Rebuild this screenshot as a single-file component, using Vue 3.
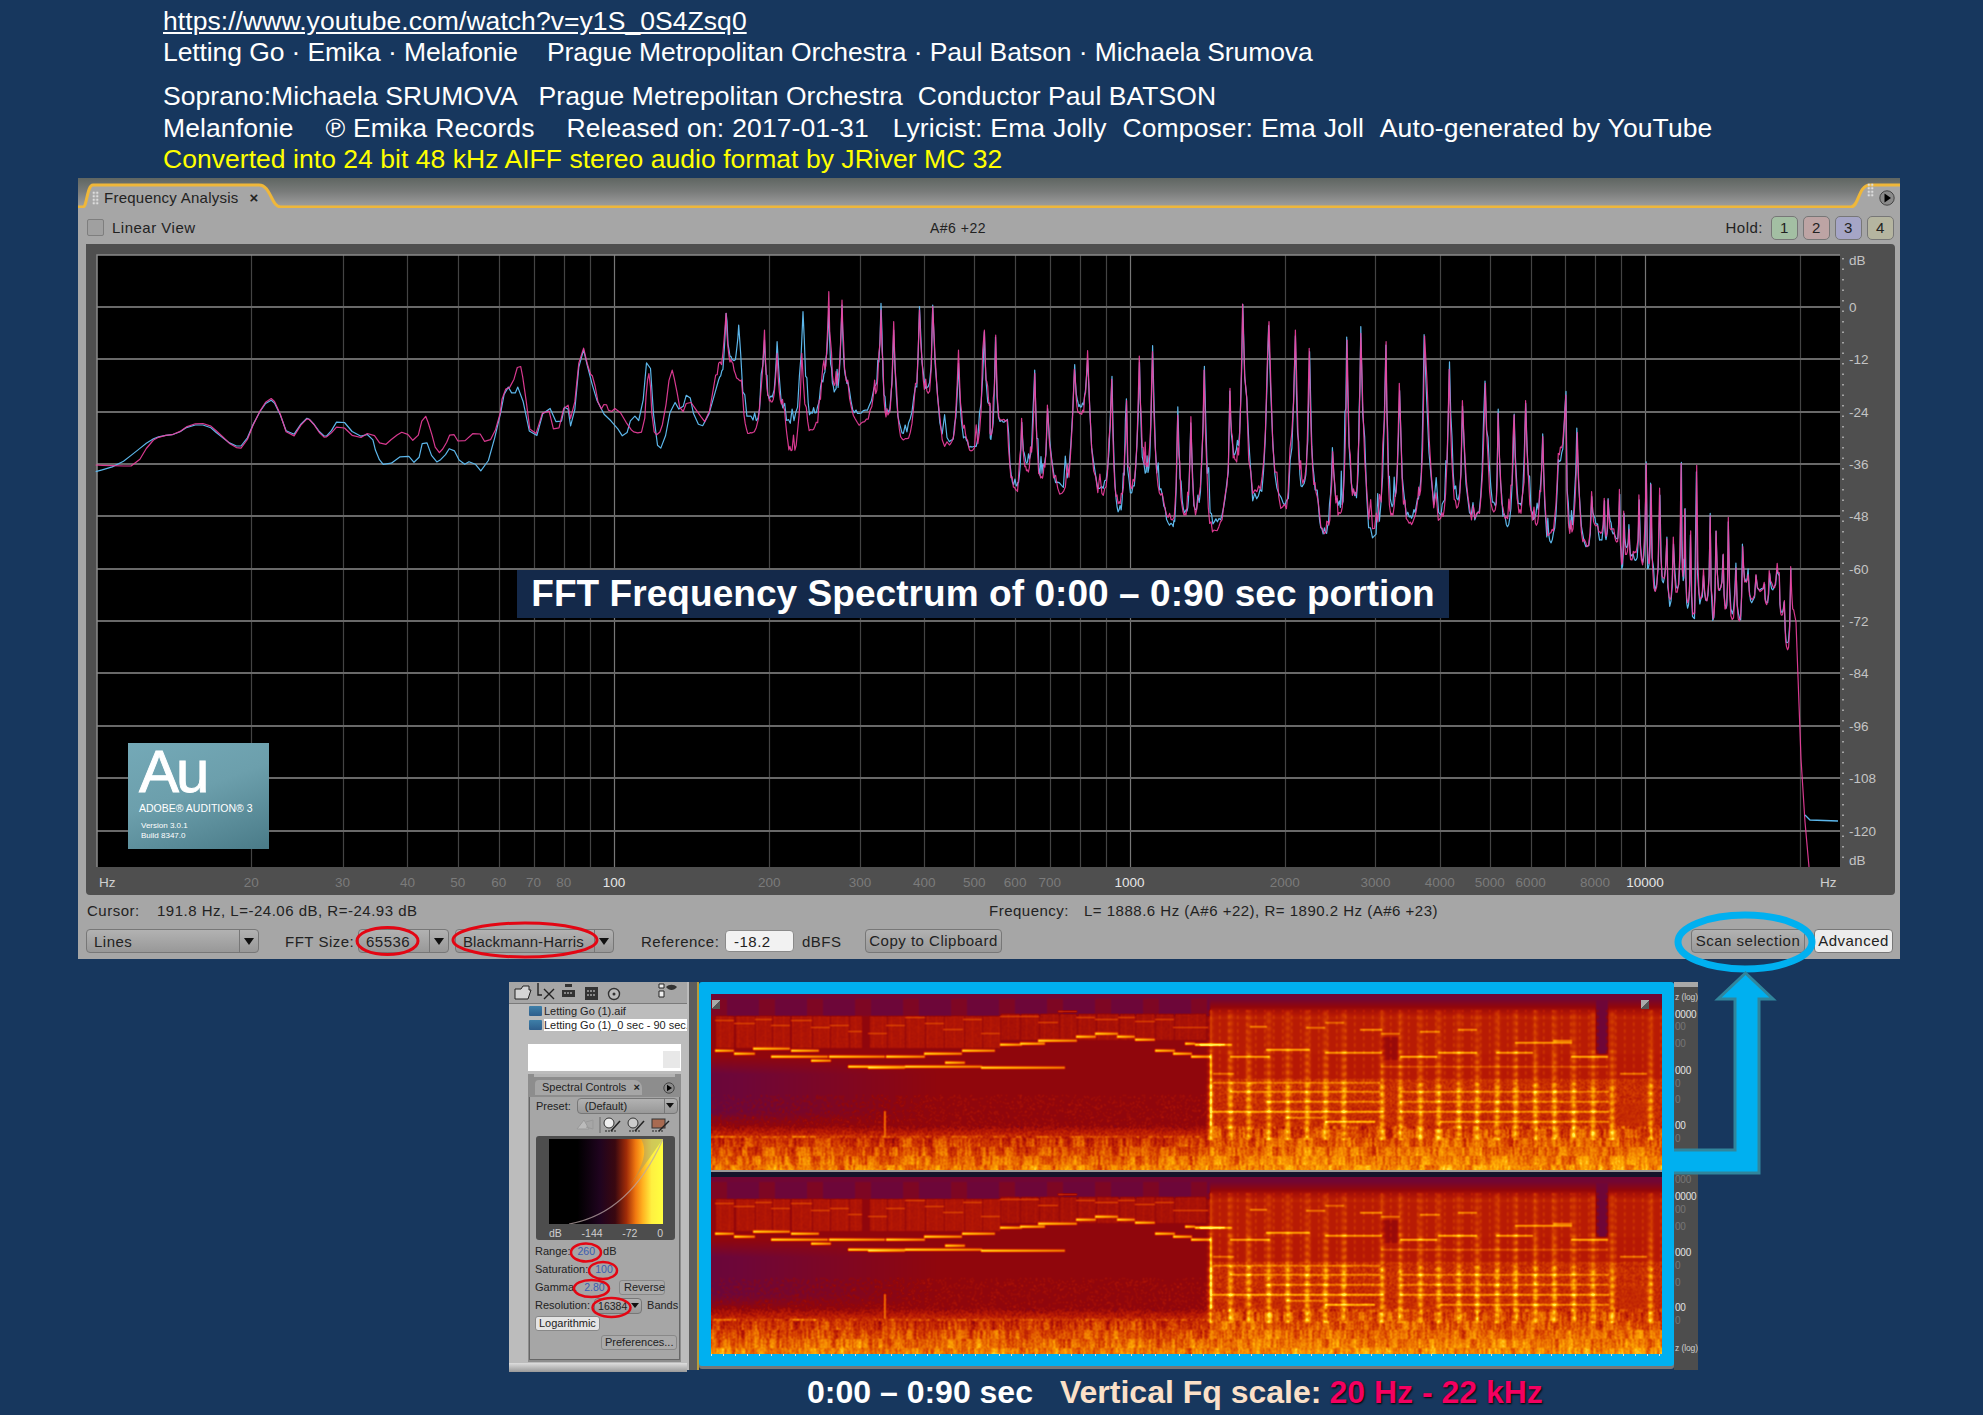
<template>
  <div class="page">
    <div class="intro">
      <a class="line url">https://www.youtube.com/watch?v=y1S_0S4Zsq0</a>
      <div class="line l2">Letting Go · Emika · Melafonie &nbsp;&nbsp; Prague Metropolitan Orchestra · Paul Batson · Michaela Srumova</div>
      <div class="line gap l3">Soprano:Michaela SRUMOVA &nbsp; Prague Metrepolitan Orchestra &nbsp;Conductor Paul BATSON</div>
      <div class="line l4">Melanfonie &nbsp;&nbsp; ℗ Emika Records &nbsp;&nbsp; Released on: 2017-01-31 &nbsp; Lyricist: Ema Jolly &nbsp;Composer: Ema Joll &nbsp;Auto-generated by YouTube</div>
      <div class="line yellow">Converted into 24 bit 48 kHz AIFF stereo audio format by JRiver MC 32</div>
    </div>

    <section class="panel">
      <div class="tabbar">
        <svg class="tabshape" viewBox="0 0 1822 30" width="1822" height="30">
          <path d="M0 30H5C9 30 9 8 15 8H181C193 8 193 30 203 30H1773C1781 30 1780 8 1792 8H1822V31H0Z" fill="#a6a6a6" />
          <path d="M0 29H5C9 29 9 7 15 7H181C193 7 193 29 203 29H1773C1781 29 1780 7 1792 7H1822" fill="none" stroke="#efb73a" stroke-width="3" />
        </svg>
        <span class="grip"></span>
        <span class="tabtitle">Frequency Analysis</span>
        <span class="tabclose">×</span>
        <span class="grip right"></span>
        <svg class="playbtn" viewBox="0 0 16 16" width="16" height="16">
          <circle cx="8" cy="8" r="7.2" fill="#8a8a8a" stroke="#444" />
          <path d="M5.5 3.5L12 8L5.5 12.5Z" fill="#000" />
        </svg>
      </div>

      <div class="viewrow">
        <span class="check"></span>
        <span class="viewlabel">Linear View</span>
        <span class="note">A#6 +22</span>
        <span class="holdlabel">Hold:</span>
        <span v-for="h in holds" :key="h.n" class="hold" :class="h.cls">{{ h.n }}</span>
      </div>

      <div class="frame">
        <svg class="plot" viewBox="86 244 1809 651" width="1809" height="651">
          <rect x="97" y="255" width="1743" height="612" fill="#000" />
          <line v-for="v in vLines" :key="'v' + v.x" :x1="v.x" :x2="v.x" y1="255" y2="867" :stroke="v.major ? '#777' : '#444'" stroke-width="1.2" />
          <line v-for="g in hLines" :key="'h' + g.y" x1="97" x2="1840" :y1="g.y" :y2="g.y" stroke="#696969" stroke-width="1.8" />
          <path d="M97 867V255H1840" fill="none" stroke="#8a8a8a" stroke-width="1.5" />
          <polyline :points="bluePts" fill="none" stroke="#5cb6ea" stroke-width="1.2" stroke-linejoin="round" />
          <polyline :points="pinkPts" fill="none" stroke="#ee3f9f" stroke-width="1.2" stroke-linejoin="round" opacity="0.9" />
          <polyline points="1805,815 1810,820 1838,821" fill="none" stroke="#5cb6ea" stroke-width="1.3" />
          <text v-for="l in xLabels" :key="'x' + l.t" :x="l.x" y="887" class="xlabel" :class="{ bright: l.major }" text-anchor="middle">{{ l.t }}</text>
          <text x="99" y="887" class="hz">Hz</text>
          <text x="1820" y="887" class="hz">Hz</text>
          <text v-for="l in dbLabels" :key="'d' + l.t" x="1849" :y="l.y" class="dblabel">{{ l.t }}</text>
          <line x1="1843" x2="1843" y1="258" y2="865" stroke="#ddd" stroke-width="1.2" stroke-dasharray="1.5 9" />
        </svg>
        <div class="brand">
          <div class="au">Au</div>
          <div class="audition">ADOBE® AUDITION® 3</div>
          <div class="build">Version 3.0.1<br />Build 8347.0</div>
        </div>
        <div class="banner">FFT Frequency Spectrum of 0:00 – 0:90 sec portion</div>
      </div>

      <div class="readout">
        <span class="cursorlabel">Cursor:</span>
        <span class="cursorval">191.8 Hz, L=-24.06 dB, R=-24.93 dB</span>
        <span class="freqlabel">Frequency:</span>
        <span class="freqval">L= 1888.6 Hz (A#6 +22), R= 1890.2 Hz (A#6 +23)</span>
      </div>

      <div class="controls">
        <span class="combo lines"><span class="comboval">Lines</span><span class="caret"></span></span>
        <span class="ctl-label fft">FFT Size:</span>
        <span class="combo size"><span class="comboval">65536</span><span class="caret"></span></span>
        <span class="combo windowfn"><span class="comboval">Blackmann-Harris</span><span class="caret"></span></span>
        <span class="ctl-label ref">Reference:</span>
        <span class="refinput">-18.2</span>
        <span class="ctl-label dbfs">dBFS</span>
        <span class="btn copy">Copy to Clipboard</span>
        <span class="btn scan">Scan selection</span>
        <span class="btn adv">Advanced</span>
      </div>
    </section>

    <section class="lower">
      <aside class="side">
        <div class="tools">
          <svg viewBox="0 0 168 20" width="168" height="20">
            <path d="M6 7H12L14 4H20V8H22L19 17H6Z" fill="#d4d4d4" stroke="#222" />
            <path d="M29 1V13H33M35 7L45 17M45 7L35 17" fill="none" stroke="#222" stroke-width="1.4" />
            <path d="M53 8H66V15H53Z" fill="#333" /><path d="M55 11H64" stroke="#ddd" stroke-dasharray="2 1" /><path d="M56 2H63V5H56Z" fill="#333" />
            <path d="M76 5H89V18H76Z" fill="#333" /><path d="M78 9H87M78 13H87" stroke="#ddd" stroke-dasharray="2 1" />
            <circle cx="105" cy="12" r="5.5" fill="#bbb" stroke="#333" stroke-width="1.4" /><circle cx="105" cy="12" r="1.5" fill="#333" />
            <path d="M150 2H155V6H150ZM150 9H155V15H150Z" fill="#eee" stroke="#222" />
            <path d="M157 5C160 2 165 2 168 5C165 9 160 9 157 5Z" fill="#333" />
          </svg>
        </div>
        <div class="file"><span class="wave"></span><span>Letting Go (1).aif</span></div>
        <div class="file on"><span class="wave"></span><span class="filename">Letting Go (1)_0 sec - 90 sec.a</span></div>
        <div class="whitebox"><span class="ghostx"></span></div>
        <div class="spectral">
          <div class="strip"></div>
          <div class="sp-tabs">
            <span class="sp-tab">Spectral Controls <b>×</b></span>
            <svg class="sp-play" viewBox="0 0 12 12" width="12" height="12"><circle cx="6" cy="6" r="5.2" fill="#8a8a8a" stroke="#444" /><path d="M4 2.8L9 6L4 9.2Z" fill="#000" /></svg>
          </div>
          <div class="sp-body">
            <div class="presetrow">
              <span>Preset:</span>
              <span class="combo preset"><span class="comboval">(Default)</span><span class="caret"></span></span>
            </div>
            <div class="sp-icons">
              <svg viewBox="0 0 100 16" width="100" height="16">
                <path d="M2 12L9 3L14 12Z" fill="#bbb" stroke="#999" /><path d="M11 5L18 3V12L11 10" fill="none" stroke="#999" />
                <line x1="25" x2="25" y1="0" y2="16" stroke="#666" />
                <circle cx="34" cy="6" r="5" fill="#eee" stroke="#333" /><path d="M36 14L45 4" stroke="#222" stroke-width="1.5" /><path d="M30 14H42" stroke="#222" stroke-dasharray="2 1" />
                <circle cx="58" cy="6" r="5" fill="#ccc" stroke="#333" /><path d="M60 14L69 4" stroke="#222" stroke-width="1.5" /><path d="M54 14H66" stroke="#222" stroke-dasharray="2 1" />
                <rect x="77" y="2" width="13" height="9" fill="#a86a50" stroke="#333" /><path d="M84 14L94 4" stroke="#222" stroke-width="1.5" /><path d="M77 14H88" stroke="#222" stroke-dasharray="2 1" />
              </svg>
            </div>
            <div class="ramp">
              <div class="rampview">
                <svg viewBox="0 0 114 85" width="114" height="85" preserveAspectRatio="none">
                  <path d="M114 0L92 0C100 14 92 30 80 48Z" fill="#9a9a70" opacity="0.45" />
                  <path d="M114 0C92 50 60 78 20 85" fill="none" stroke="#b9a7a7" stroke-width="1.2" opacity="0.75" />
                </svg>
              </div>
              <div class="ramplabels"><span>dB</span><span>-144</span><span>-72</span><span>0</span></div>
            </div>
            <div class="sprow">Range:<i class="val">260</i><span class="unit">dB</span></div>
            <div class="sprow">Saturation:<i class="val">100</i></div>
            <div class="sprow">Gamma:<i class="val">2.80</i><span class="smallbtn rev">Reverse</span></div>
            <div class="sprow">Resolution:<span class="combo res"><span class="comboval">16384</span><span class="caret"></span></span><span class="bands">Bands</span></div>
            <div class="sprow"><span class="smallbtn log">Logarithmic</span></div>
            <div class="sprow prefs"><span class="smallbtn">Preferences...</span></div>
          </div>
        </div>
        <div class="scrollbar"></div>
      </aside>
      <div class="divider"></div>
      <div class="specwrap">
        <canvas ref="topCanvas" width="951" height="176"></canvas>
        <div class="specgap"></div>
        <canvas ref="botCanvas" width="951" height="177"></canvas>
        <span class="corner left"></span>
        <span class="corner right"></span>
        <span class="ticks"></span>
      </div>
      <div class="scale">
        <svg viewBox="1674 981 24 387" width="24" height="387">
          <text v-for="s in scaleLabels" :key="s.y" x="1675" :y="s.y" class="scaletext" :class="{ hi: s.hi, unitname: s.t === 'z (log)' }">{{ s.t }}</text>
        </svg>
      </div>
    </section>

    <div class="caption">
      <span class="white">0:00 – 0:90 sec</span>
      <span class="peach">Vertical Fq scale:</span>
      <span class="hot">20 Hz - 22 kHz</span>
    </div>

    <svg class="marks" viewBox="0 0 1983 1415" width="1983" height="1415">
      <ellipse cx="387.5" cy="941" rx="30.5" ry="13.5" fill="none" stroke="#e30613" stroke-width="3" />
      <ellipse cx="525" cy="940" rx="72" ry="17" fill="none" stroke="#e30613" stroke-width="3" />
      <ellipse cx="586" cy="1252.5" rx="15" ry="9" fill="none" stroke="#e30613" stroke-width="2.5" />
      <ellipse cx="603" cy="1270.5" rx="14" ry="8.5" fill="none" stroke="#e30613" stroke-width="2.5" />
      <ellipse cx="591.5" cy="1288.5" rx="17.5" ry="8.5" fill="none" stroke="#e30613" stroke-width="2.5" />
      <ellipse cx="611.5" cy="1307.5" rx="19" ry="9.5" fill="none" stroke="#e30613" stroke-width="2.5" />
      <ellipse cx="1745" cy="942" rx="67" ry="27" fill="none" stroke="#00b0f0" stroke-width="7" />
      <path d="M1674 1150H1735V999H1718L1745.5 973L1773 999H1759V1173H1674" fill="#00b0f0" stroke="#31859c" stroke-width="3" />
    </svg>
  </div>
</template>

<script setup>
import { onMounted, ref } from 'vue'

const holds = [
  { n: 1, cls: 'h1' },
  { n: 2, cls: 'h2' },
  { n: 3, cls: 'h3' },
  { n: 4, cls: 'h4' }
]

const random = seed => () => {
  seed |= 0
  seed = (seed + 0x6d2b79f5) | 0
  let t = Math.imul(seed ^ (seed >>> 15), 1 | seed)
  t = (t + Math.imul(t ^ (t >>> 7), 61 | t)) ^ t
  return ((t ^ (t >>> 14)) >>> 0) / 4294967296
}

// the low decade is drawn a touch wider than the others in the reference
const fx = f => (f < 100 ? 614 - 519 * (2 - Math.log10(f)) : 614 + 515.5 * (Math.log10(f) - 2))
const vLines = []
for (const d of [10, 100, 1000, 10000]) {
  for (let m = 1; m < 10; m++) {
    const f = d * m
    if (f === 10 || f > 20000) continue
    vLines.push({ x: Math.round(fx(f)) + 0.5, major: m === 1 })
  }
}
const hLines = []
for (let i = 0; i <= 10; i++) hLines.push({ y: Math.round(307 + i * 52.35) })

const xLabels = [20, 30, 40, 50, 60, 70, 80, 100, 200, 300, 400, 500, 600, 700, 1000, 2000, 3000, 4000, 5000, 6000, 8000, 10000].map(f => ({
  t: f,
  x: fx(f),
  major: f === 100 || f === 1000 || f === 10000
}))

const dbLabels = [{ t: 'dB', y: 265 }, ...Array.from({ length: 11 }, (_, i) => ({ t: i === 0 ? '0' : String(-12 * i), y: 312 + i * 52.35 })), { t: 'dB ', y: 865 }]

const scaleLabels = [
  { t: 'z (log)', y: 999 }, { t: '0000', y: 1017, hi: 1 }, { t: '00', y: 1029 }, { t: '00', y: 1046 },
  { t: '000', y: 1073, hi: 1 }, { t: '0', y: 1086 }, { t: '0', y: 1102 }, { t: '00', y: 1128, hi: 1 },
  { t: '0', y: 1141 }, { t: '000', y: 1182 }, { t: '0000', y: 1199, hi: 1 }, { t: '00', y: 1212 },
  { t: '00', y: 1229 }, { t: '000', y: 1255, hi: 1 }, { t: '0', y: 1268 }, { t: '0', y: 1285 },
  { t: '00', y: 1310, hi: 1 }, { t: '0', y: 1323 }, { t: 'z (log)', y: 1350 }
]

// traced from the reference, low end of the spectrum
const pinkLow = [[10,645],[50,648],[80,648],[105,575],[125,557],[150,553],[175,522],[205,520],[225,550],[250,592],[268,595],[290,500],[312,440],[325,460],[348,578],[375,505],[385,510],[405,562],[415,560],[435,520],[465,570],[490,543],[510,592],[530,560],[548,542],[568,582],[582,487],[592,530],[605,615],[618,590],[630,542],[645,585],[675,538],[692,588],[712,520],[720,420],[735,410],[748,330],[756,400],[770,590],[795,450],[812,570],[830,440],[840,530],[856,265],[870,370],[877,380],[888,485],[898,455],[905,490],[918,470],[940,535],[950,550],[965,545],[970,400],[975,360],[980,540],[990,560],[1000,510],[1012,345],[1020,400],[1030,500],[1042,445],[1060,490],[1075,525],[1090,375]]
const blueLow = [[10,665],[50,645],[80,605],[105,570],[125,557],[150,553],[175,525],[205,525],[225,555],[250,588],[268,588],[290,500],[312,445],[325,465],[348,572],[375,503],[385,510],[405,558],[415,558],[435,500],[465,562],[490,550],[500,620],[515,652],[550,608],[570,648],[582,555],[600,640],[615,625],[630,585],[648,648],[665,630],[687,675],[712,520],[725,400],[738,440],[748,400],[772,598],[795,450],[818,540],[830,445],[840,560],[856,270],[870,375],[888,480],[915,525],[932,570],[945,490],[960,520],[973,268],[985,580],[998,600],[1015,445],[1030,490],[1042,415],[1055,520],[1072,530],[1095,390]]

const midPink = [[1090,375],[1108,190],[1120,340],[1135,390],[1150,548],[1175,240],[1185,450],[1197,310],[1210,480],[1223,600],[1240,310],[1258,540],[1275,380],[1287,125],[1298,400],[1310,150],[1320,390],[1343,520],[1365,430],[1378,180],[1390,495],[1400,215],[1417,570],[1438,400],[1445,180],[1460,430],[1468,170],[1497,585],[1513,300],[1525,550],[1538,600],[1558,240],[1568,460]]
const midBlue = [[1095,390],[1108,190],[1120,330],[1130,225],[1155,510],[1175,270],[1185,440],[1197,275],[1220,520],[1242,185],[1258,490],[1275,390],[1287,175],[1298,420],[1310,165],[1320,395],[1340,490],[1365,420],[1378,160],[1390,480],[1400,240],[1417,550],[1438,410],[1445,170],[1460,410],[1468,165],[1497,575],[1513,340],[1525,560],[1538,590],[1558,245],[1568,470]]

const topPart = [[0,460],[10,165],[18,420],[30,420],[45,630],[55,415],[65,570],[78,280],[90,590],[100,375],[125,640],[147,268],[158,400],[170,212],[195,640],[212,298],[225,665],[238,362],[245,620],[260,228],[272,560],[283,215],[300,640],[318,720],[327,405],[340,700],[350,410],[358,705],[373,270],[390,750],[410,640],[418,325],[428,540],[440,72],[465,635],[486,125],[510,680],[532,150],[545,610],[556,205],[570,650],[585,755],[597,515],[610,700],[622,180],[635,640],[646,160],[670,745],[690,185],[700,700],[713,310],[730,730],[745,660],[757,168],[785,715],[800,268],[815,680],[823,362],[845,715],[863,310],[880,690],[885,400],[900,710],[913,405],[925,700],[933,362],[950,730],[963,470],[975,760],[990,520],[1003,345],[1010,760],[1023,458],[1040,800]]

const lerpTable = (table, x) => {
  for (let i = 1; i < table.length; i++) {
    if (x <= table[i][0]) {
      const [x0, y0] = table[i - 1]
      const [x1, y1] = table[i]
      return y0 + ((y1 - y0) * (x - x0)) / (x1 - x0)
    }
  }
  return table[table.length - 1][1]
}

const topEnv = [[1040,470],[1068,490],[1100,585],[1157,518],[1213,530],[1228,535],[1276,655],[1335,708],[1378,848],[1395,960]]
const botEnv = [[1040,800],[1090,880],[1130,935],[1218,1010],[1303,1040],[1345,975],[1395,975]]

// the dense harmonics above 6 kHz, irregular on purpose
const denseTail = (seed, reach) => {
  const rnd = random(seed)
  const out = []
  let X = 1048
  while (X < 1392) {
    const step = 6 + rnd() * 9
    out.push([X, lerpTable(topEnv, X) + rnd() * reach])
    out.push([X + step / 2, lerpTable(botEnv, X) - rnd() * 130])
    X += step
  }
  return out
}

const chaikin = pts => {
  const out = [pts[0]]
  for (let i = 0; i < pts.length - 1; i++) {
    const [ax, ay] = pts[i]
    const [bx, by] = pts[i + 1]
    out.push([ax * 0.72 + bx * 0.28, ay * 0.72 + by * 0.28], [ax * 0.28 + bx * 0.72, ay * 0.28 + by * 0.72])
  }
  return out
}

// concave, ragged flanks so the peaks read as narrow spikes over a noise floor
const spiky = (pts, seed) => {
  const rnd = random(seed)
  const out = []
  for (let i = 0; i < pts.length - 1; i++) {
    const [ax, ay] = pts[i]
    const [bx, by] = pts[i + 1]
    out.push([ax, ay])
    const peakIsA = ay < by
    const d = Math.abs(ay - by)
    const low = Math.max(ay, by)
    const inner = []
    const n = Math.abs(bx - ax) > 9 ? 6 : 2
    for (let k = 1; k <= n; k++) {
      const t = k / (n + 1)
      const x = peakIsA ? ax + (bx - ax) * t : bx - (bx - ax) * t
      let y = low - d * Math.pow(1 - t, 3.2) + (rnd() - 0.5) * (8 + d * 0.06)
      if (rnd() < 0.28) y -= d * 0.2 * rnd()
      inner.push([x, Math.min(low + 6, y)])
    }
    if (!peakIsA) inner.reverse()
    out.push(...inner)
  }
  out.push(pts[pts.length - 1])
  return out
}

const fromA = ([X, Y]) => [90 + X / 1.742, 250 + Y / 3]
const fromB = ([X, Y]) => [990 + X / 1.742, 280 + Y / 3]
const toPoints = pts => pts.map(([x, y]) => `${x.toFixed(1)},${y.toFixed(1)}`).join(' ')

const wobble = (pts, seed, amount) => {
  const rnd = random(seed)
  return pts.map(([X, Y]) => [X + (rnd() - 0.5) * 1.6, Y + (rnd() - 0.5) * amount])
}

const tailEnd = [[1796, 622], [1801, 759], [1805, 822], [1809, 867]]
const pinkTail = denseTail(11, 300)

const pinkPts = toPoints([
  ...chaikin(pinkLow).map(fromA),
  ...spiky(midPink, 3).map(fromA),
  ...spiky([...topPart, ...pinkTail, [1400, 990]], 4).map(fromB),
  ...tailEnd
])
// up high the two channels nearly coincide, blue only peeks out beside the pink
const bluePts = toPoints([
  ...chaikin(blueLow).map(fromA),
  ...spiky(midBlue, 8).map(fromA),
  ...spiky([...wobble(topPart, 5, 50), ...wobble(pinkTail, 31, 45)], 9).map(fromB)
])

const melody = [[30,85,192],[88,150,202],[145,255,188],[200,370,211],[258,340,192],[320,380,224],[372,540,210],[430,600,240],[490,600,243],[545,660,210],[600,830,240],[658,770,202],[720,780,228],[772,870,192],[830,1080,244],[885,950,176],[945,1020,172],[1000,1115,162],[1115,1175,150],[1172,1240,142],[1238,1290,150],[1290,1350,159],[1350,1410,192],[1405,1460,202],[1440,1470,172],[1470,1560,175],[1460,1520,211]]
const upper = [[30,85,103],[88,150,112],[150,200,100],[200,255,118],[258,320,103],[320,375,125],[375,430,118],[430,470,135],[490,545,142],[545,600,118],[600,660,95],[660,715,112],[715,775,130],[775,830,100],[830,885,142],[885,945,90],[945,1000,92],[1000,1060,110],[1060,1115,75],[1115,1172,95],[1172,1240,100],[1240,1290,95],[1290,1350,107],[1350,1405,100],[1405,1510,125]]
const rightCols = [30,90,145,205,262,320,375,430,545,600,660,715,775,830,890,945,1005,1062,1120,1178,1235,1350]
const rightLines = [[0,95,175,0.5],[200,330,190,0.55],[90,210,210,0.55],[600,710,210,0.6],[1115,1225,210,0.6],[375,545,200,0.5],[715,830,200,0.55],[890,1000,200,0.5],[945,1115,170,0.5],[545,1225,240,0.22],[40,100,262,0.35],[1260,1340,262,0.4],[40,540,290,0.3],[90,540,315,0.35],[600,1225,315,0.32],[200,540,345,0.32],[600,1225,345,0.3],[30,550,375,0.5],[600,1225,375,0.42],[375,525,405,0.6],[720,1225,405,0.36],[260,370,395,0.32],[150,200,120,0.4],[320,375,125,0.35],[480,545,130,0.45],[660,720,137,0.4],[775,830,130,0.4],[545,600,142,0.35],[375,430,110,0.3],[1060,1115,162,0.4]]

const STOPS = [
  [0, 74, 6, 74], [0.14, 110, 6, 56], [0.25, 146, 6, 10], [0.36, 182, 24, 4],
  [0.5, 212, 62, 0], [0.66, 238, 118, 0], [0.82, 255, 172, 4], [1, 255, 240, 80]
]
const colour = v => {
  const c = Math.min(1, Math.max(0, v))
  for (let i = 1; i < STOPS.length; i++) {
    if (c <= STOPS[i][0]) {
      const a = STOPS[i - 1]
      const b = STOPS[i]
      const t = (c - a[0]) / (b[0] - a[0])
      return [a[1] + (b[1] - a[1]) * t, a[2] + (b[2] - a[2]) * t, a[3] + (b[3] - a[3]) * t]
    }
  }
  return STOPS[STOPS.length - 1].slice(1)
}

const blur = (f, W, H) => {
  const a = new Float32Array(f.length)
  for (let y = 0; y < H; y++) {
    for (let x = 0; x < W; x++) {
      const l = f[y * W + Math.max(0, x - 1)]
      const r = f[y * W + Math.min(W - 1, x + 1)]
      a[y * W + x] = (l + 2 * f[y * W + x] + r) / 4
    }
  }
  const b = new Float32Array(f.length)
  for (let y = 0; y < H; y++) {
    for (let x = 0; x < W; x++) {
      const u = a[Math.max(0, y - 1) * W + x]
      const d = a[Math.min(H - 1, y + 1) * W + x]
      b[y * W + x] = (u + 2 * a[y * W + x] + d) / 4
    }
  }
  return b
}

const paint = (canvas, seed) => {
  const W = canvas.width
  const H = canvas.height
  const rnd = random(seed)
  const f = new Float32Array(W * H)
  const lx = X => X / 3 - 6
  const ly = Y => Y / 3 - 8
  const rx = X => 489 + X / 3
  const put = (x, y, v) => {
    if (x >= 0 && y >= 0 && x < W && y < H) f[(y | 0) * W + (x | 0)] = Math.max(f[(y | 0) * W + (x | 0)], v)
  }
  // slow-moving column noise, shifted every few rows so the low end looks mottled
  const streak = new Float32Array(W)
  let s = 0.5
  for (let x = 0; x < W; x++) {
    s = s * 0.5 + rnd() * 0.5
    streak[x] = s
  }
  const mottle = (x, y) => streak[(x + ((y / 9) | 0) * 137) % W] - 0.5

  for (let y = 0; y < H; y++) {
    for (let x = 0; x < W; x++) {
      const n = rnd()
      let v
      if (x < 499) {
        if (y < 5) v = 0.15
        else if (y < 22) v = 0.1 + 0.09 * ((x >> 4) % 3 === 0 ? 1 : 0.4)
        else if (y < 132) {
          const side = Math.max(0, 1 - x / 230)
          const mid = y > 62 ? Math.min(1, (y - 62) / 18) * Math.min(1, (132 - y) / 15) : 0
          v = 0.245 - 0.12 * side * mid + (y > 100 && n > 0.9 ? 0.12 : 0)
        } else if (y < 142) {
          v = 0.27 + ((y - 132) / 10) * 0.16 + (n - 0.5) * 0.22
        } else {
          v = 0.42 + ((y - 142) / 34) * 0.27 + (n - 0.5) * 0.22 + mottle(x, y) * 0.5
        }
      } else {
        if (y < 5) v = 0.15
        else if (y < 14) v = 0.16 + (y - 5) * 0.012
        else if (y < 25) v = 0.28 + (y - 14) * 0.012
        else if (y < 60) v = 0.37
        else if (y < 85) v = 0.36
        else if (y < 132) v = 0.43 + (n - 0.5) * 0.2
        else v = 0.47 + ((y - 132) / 44) * 0.27 + (n - 0.5) * 0.22 + mottle(x, y) * 0.5
        if (x > 884 && x < 897 && y > 5 && y < 60) v = 0.14
        if (x > 669 && x < 687 && y > 42 && y < 66) v = 0.27
        if (x > 908 && x < 936 && y > 108 && y < 132) v = 0.36 + n * 0.14
      }
      f[y * W + x] = v
    }
  }

  // note blocks behind the melody on the quiet side
  for (const [a, b] of upper) {
    const quiet = a >= 885
    const top = ly(quiet ? 85 : 92)
    const bottom = ly(quiet ? 160 : 184)
    for (let x = Math.ceil(lx(a)) + 1; x < Math.min(lx(b), 495); x++) {
      for (let y = top | 0; y < bottom; y++) {
        const i = (y | 0) * W + x
        f[i] = Math.max(f[i], (quiet ? 0.29 : 0.31) + rnd() * 0.05 + (x % 9 === 0 ? 0.04 : 0))
      }
    }
  }
  for (const [a, b, Y] of upper) {
    for (let x = lx(a); x < lx(b); x++) {
      put(x, ly(Y), 0.6)
    }
  }
  for (const [a, b, Y] of melody) {
    const len = lx(b) - lx(a)
    for (let x = lx(a); x < lx(b); x++) {
      const fade = 1 - ((x - lx(a)) / len) * 0.65
      put(x, ly(Y), 0.64 + 0.4 * fade)
      put(x, ly(Y) + 1, 0.44 + 0.42 * fade)
      put(x, ly(Y) - 1, 0.32 + 0.28 * fade)
    }
  }
  // the lone click near the first third
  for (let y = ly(375); y < ly(450); y++) {
    put(lx(538), y, 0.72)
    put(lx(541), y, 0.6)
  }
  // a brighter band where the room tone sits
  for (let x = 3; x < 499; x++) {
    const i = 142 * W + x
    const strong = x < 25 || (x > 80 && x < 105)
    f[i] += strong ? 0.28 : 0.1
    f[i + W] += strong ? 0.12 : 0.04
  }

  // louder section, notes as columns with dotted harmonics
  for (const X of rightCols) {
    const c = rx(X)
    for (let x = Math.floor(c - 8); x < c + 8; x++) {
      if (x < 0 || x >= W) continue
      const d = Math.abs(x - c)
      for (let y = 16; y < 146; y++) {
        const i = y * W + x
        const dots = 0.5 + 0.5 * Math.sin(y * 0.85 + X)
        const heavy = y > 88 ? 0.44 : y > 55 ? 0.24 : 0.13
        f[i] += heavy * Math.exp(-(d * d) / 7) * (0.4 + 0.6 * dots)
      }
    }
  }
  for (let x = 499; x < W; x += 9) {
    for (let y = 16; y < 110; y++) {
      f[y * W + x] += 0.12 * (0.5 + 0.5 * Math.sin(y * 0.9))
      f[y * W + x + 1] += 0.06 * (0.5 + 0.5 * Math.sin(y * 0.9))
    }
  }
  for (const [a, b, Y, g] of rightLines) {
    for (let x = rx(a); x < rx(b); x++) {
      const i = (ly(Y) | 0) * W + (x | 0)
      if (i >= 0 && i + W < f.length) {
        f[i] += g
        f[i + W] += g * 0.5
      }
    }
  }
  // sharp attack at the point the orchestra comes in
  for (let y = 60; y < 132; y++) {
    const i = y * W + 499
    f[i] += 0.4
    f[i + 1] += 0.28
  }

  const soft = blur(f, W, H)
  const ctx = canvas.getContext('2d')
  const img = ctx.createImageData(W, H)
  for (let i = 0; i < soft.length; i++) {
    const [r, g, b] = colour(soft[i])
    img.data[i * 4] = r
    img.data[i * 4 + 1] = g
    img.data[i * 4 + 2] = b
    img.data[i * 4 + 3] = 255
  }
  ctx.putImageData(img, 0, 0)
}

const topCanvas = ref(null)
const botCanvas = ref(null)

onMounted(() => {
  paint(topCanvas.value, 7)
  paint(botCanvas.value, 23)
})
</script>

<style>
html,
body {
  margin: 0;
  background: #17375e;
}
</style>

<style scoped>
.page {
  position: relative;
  width: 1983px;
  height: 1415px;
  overflow: hidden;
  background: #17375e;
  font-family: "Liberation Sans", Arial, sans-serif;
  color: #222;
}

.intro {
  height: 178px;
  box-sizing: border-box;
  padding: 6px 0 0 163px;
  color: #fff;
  font-size: 26.5px;
}

.line {
  display: block;
  height: 31px;
  line-height: 31px;
  white-space: nowrap;
}

.url {
  color: #fff;
  text-decoration: underline;
  letter-spacing: 0.06px;
}

.l2 {
  letter-spacing: -0.1px;
}

.l3 {
  letter-spacing: 0.07px;
}

.l4 {
  margin-top: 1px;
  letter-spacing: 0.1px;
  word-spacing: 0.5px;
}

.gap {
  margin-top: 13px;
}

.yellow {
  color: #ffff00;
  letter-spacing: 0.04px;
}

.panel {
  width: 1822px;
  height: 781px;
  margin-left: 78px;
  background: #a6a6a6;
}

.tabbar {
  position: relative;
  height: 30px;
  background: linear-gradient(#5f6662, #797b7a 45%, #a2a2a2);
  display: flex;
  align-items: center;
  font-size: 15px;
  letter-spacing: 0.25px;
}

.tabshape {
  position: absolute;
  left: 0;
  top: 0;
}

.grip {
  position: relative;
  width: 7px;
  height: 14px;
  margin: 9px 0 0 14px;
  background: radial-gradient(circle, #ddd 1px, transparent 1.5px) 0 0 / 3.5px 3.5px;
}

.grip.right {
  position: absolute;
  right: 26px;
  top: 5px;
  margin: 0;
}

.tabtitle {
  position: relative;
  margin: 9px 0 0 5px;
  color: #222;
}

.tabclose {
  position: relative;
  margin: 9px 0 0 11px;
  font-weight: 700;
}

.playbtn {
  position: absolute;
  right: 5px;
  top: 12px;
}

.viewrow {
  position: relative;
  height: 36px;
  padding-top: 3px;
  box-sizing: border-box;
  display: flex;
  align-items: center;
  font-size: 15px;
  letter-spacing: 0.5px;
}

.check {
  width: 15px;
  height: 15px;
  margin: -1px 0 0 9px;
  border: 1px solid #7e7e7e;
  border-radius: 2px;
  background: #a0a0a0;
}

.viewlabel {
  margin-left: 8px;
}

.note {
  position: absolute;
  left: 852px;
  font-size: 14px;
}

.holdlabel {
  margin-left: auto;
  margin-right: 3px;
}

.hold {
  width: 25px;
  height: 22px;
  margin-left: 5px;
  border: 1px solid #777;
  border-radius: 5px;
  text-align: center;
  line-height: 22px;
}

.hold:last-child {
  margin-right: 6px;
}

.h1 {
  background: #a3bfa3;
}

.h2 {
  background: #bda4a4;
}

.h3 {
  background: #a5a5c6;
}

.h4 {
  background: #b5b5a0;
}

.frame {
  position: relative;
  width: 1809px;
  height: 651px;
  margin-left: 8px;
  background: #4f4f4f;
  border-radius: 0 4px 4px 4px;
}

.plot {
  display: block;
  font-family: "Liberation Sans", Arial, sans-serif;
}

.xlabel {
  font-size: 13.5px;
  fill: #7b7b7b;
}

.xlabel.bright {
  fill: #e6e6e6;
}

.hz {
  font-size: 13.5px;
  fill: #cfcfcf;
}

.dblabel {
  font-size: 13.5px;
  fill: #c4c4c4;
}

.brand {
  position: absolute;
  left: 42px;
  top: 499px;
  width: 141px;
  height: 106px;
  box-sizing: border-box;
  padding-left: 11px;
  background: linear-gradient(160deg, #74a9b7, #6c9fac 45%, #4a7b88);
  color: #fff;
}

.au {
  height: 58px;
  font-size: 60px;
  line-height: 58px;
  letter-spacing: -3px;
  -webkit-text-stroke: 0.9px #fff;
}

.audition {
  margin-top: 1px;
  font-size: 10.5px;
  line-height: 12px;
  white-space: nowrap;
}

.build {
  margin-top: 7px;
  padding-left: 2px;
  font-size: 8px;
  line-height: 10px;
}

.banner {
  position: absolute;
  left: 431px;
  top: 326px;
  width: 932px;
  height: 48px;
  background: #14294a;
  color: #fff;
  font-size: 37px;
  font-weight: 700;
  letter-spacing: 0.06px;
  line-height: 48px;
  text-align: center;
  white-space: nowrap;
}

.readout {
  position: relative;
  height: 31px;
  font-size: 15px;
  letter-spacing: 0.5px;
  line-height: 32px;
}

.readout span {
  position: absolute;
  white-space: nowrap;
}

.cursorlabel {
  left: 9px;
}

.cursorval {
  left: 79px;
}

.freqlabel {
  left: 911px;
}

.freqval {
  left: 1006px;
}

.controls {
  height: 32px;
  display: flex;
  align-items: center;
  font-size: 15px;
  letter-spacing: 0.5px;
  padding-bottom: 2px;
  box-sizing: border-box;
}

.combo {
  display: inline-flex;
  align-items: center;
  box-sizing: border-box;
  height: 24px;
  flex: none;
  border: 1px solid #777;
  border-radius: 4px;
  background: linear-gradient(#b2b2b2, #989898);
  white-space: nowrap;
}

.comboval {
  flex: 1;
  min-width: 0;
  padding-left: 7px;
}

.caret {
  position: relative;
  width: 19px;
  height: 100%;
  flex: none;
  border-left: 1px solid #777;
  box-sizing: border-box;
}

.caret::after {
  content: "";
  position: absolute;
  left: 4px;
  top: 8px;
  border: 5px solid transparent;
  border-top: 7px solid #111;
  border-bottom: 0;
}

.lines {
  width: 173px;
  margin-left: 8px;
}

.ctl-label {
  flex: none;
  white-space: nowrap;
}

.fft {
  width: 73px;
  margin-left: 26px;
}

.size {
  width: 91px;
}

.windowfn {
  width: 159px;
  margin-left: 6px;
}

.windowfn .comboval {
  padding-left: 7px;
  letter-spacing: 0.1px;
}

.ref {
  width: 84px;
  margin-left: 27px;
}

.refinput {
  width: 69px;
  height: 22px;
  flex: none;
  padding-left: 8px;
  box-sizing: border-box;
  background: #f2f2f2;
  border: 1px solid #8a8a8a;
  border-radius: 4px;
  line-height: 21px;
}

.dbfs {
  width: 55px;
  margin-left: 8px;
}

.btn {
  box-sizing: border-box;
  height: 24px;
  flex: none;
  border: 1px solid #777;
  border-radius: 4px;
  background: linear-gradient(#b2b2b2, #989898);
  text-align: center;
  line-height: 22px;
  white-space: nowrap;
}

.copy {
  width: 137px;
  margin-left: 8px;
}

.scan {
  width: 114px;
  margin-left: 689px;
}

.adv {
  width: 79px;
  margin-left: 9px;
  background: #ececec;
}

.lower {
  display: flex;
  height: 388px;
  margin: 23px 0 0 509px;
}

.side {
  width: 178px;
  height: 388px;
  flex: none;
  background: #bcbcbc;
  font-size: 11px;
}

.tools {
  height: 21px;
  background: #a6a6a6;
  border-bottom: 1px solid #7a7a7a;
  overflow: hidden;
}

.file {
  display: flex;
  align-items: center;
  height: 14px;
  padding-left: 20px;
  white-space: nowrap;
}

.wave {
  width: 13px;
  height: 10px;
  margin-right: 2px;
  flex: none;
  background: linear-gradient(#3e7fa8, #2e5e8c);
  border-radius: 1px;
}

.on .filename {
  flex: 1;
  background: #fff;
}

.whitebox {
  position: relative;
  height: 27px;
  margin: 12px 6px 0 19px;
  background: #fff;
}

.ghostx {
  position: absolute;
  right: 1px;
  top: 7px;
  width: 17px;
  height: 17px;
  background: #e8e8e8;
}

.spectral {
  height: 288px;
  margin: 0 6px 0 19px;
  background: #8d8d8d;
}

.strip {
  height: 3px;
  margin: 3px 6px 0;
  background: #b4b4b4;
}

.sp-tabs {
  position: relative;
  height: 17px;
  padding-top: 3px;
}

.sp-tab {
  display: block;
  width: 107px;
  height: 15px;
  margin: 0 0 0 7px;
  padding-left: 7px;
  box-sizing: border-box;
  background: #a6a6a6;
  border-radius: 4px 8px 0 0;
  line-height: 15px;
  white-space: nowrap;
}

.sp-tab b {
  margin-left: 4px;
}

.sp-play {
  position: absolute;
  right: 6px;
  top: 5px;
}

.sp-body {
  height: 263px;
  margin: 0 1px;
  padding: 1px 6px 0;
  box-sizing: border-box;
  background: #a6a6a6;
  border: 1px solid #666;
  border-top: 0;
}

.presetrow {
  display: flex;
  align-items: center;
  gap: 6px;
}

.preset {
  width: 101px;
  height: 16px;
}

.preset .caret {
  width: 13px;
}

.preset .caret::after,
.res .caret::after {
  left: 1px;
  top: 4px;
  border-width: 4px;
  border-top-width: 5px;
  border-bottom-width: 0;
}

.sp-icons {
  height: 22px;
  padding: 3px 0 0 39px;
  box-sizing: border-box;
}

.ramp {
  width: 139px;
  height: 104px;
  box-sizing: border-box;
  padding: 3px 12px 0 13px;
  background: #4d4d4d;
  border-radius: 3px;
}

.rampview {
  width: 114px;
  height: 85px;
  background: linear-gradient(90deg, #000 25%, #20041f 45%, #3a0810 58%, #a02c08 68%, #f07810 76%, #ffb020 82%, #fff040 90%, #ffff40);
}

.rampview svg {
  display: block;
}

.ramplabels {
  display: flex;
  justify-content: space-between;
  margin-top: 3px;
  color: #cfcfcf;
  font-size: 10.5px;
}

.sprow {
  height: 18px;
  margin-left: -1px;
  line-height: 19px;
  white-space: nowrap;
  position: relative;
}

.ramp + .sprow {
  margin-top: 2px;
}

.val {
  margin-left: 7px;
  color: #3a5db0;
  font-style: normal;
  font-size: 10.5px;
}

.unit {
  margin-left: 8px;
}

.smallbtn {
  display: inline-block;
  box-sizing: border-box;
  height: 15px;
  padding: 0 3px;
  border: 1px solid #888;
  border-radius: 3px;
  background: #aaa;
  line-height: 13px;
}

.rev {
  position: absolute;
  left: 84px;
  top: 2px;
  width: 46px;
  padding: 0 4px;
}

.log {
  background: #e4e4e4;
}

.res {
  width: 48px;
  height: 16px;
  margin-left: 4px;
  vertical-align: middle;
}

.res .comboval {
  padding-left: 3px;
  font-size: 10.5px;
}

.res .caret {
  width: 11px;
  border-left: 0;
}

.bands {
  margin-left: 5px;
}

.prefs {
  margin-top: 1px;
  padding-left: 66px;
}

.scrollbar {
  height: 9px;
  margin-top: 1px;
  background: linear-gradient(#ddd, #999);
}

.divider {
  width: 12px;
  height: 388px;
  flex: none;
  background: linear-gradient(90deg, #bbb 0, #bbb 2px, #5d5d5d 2px, #5d5d5d 10px, #b89b3a 10px);
}

.specwrap {
  position: relative;
  width: 975px;
  height: 384px;
  flex: none;
  box-sizing: border-box;
  border: 12px solid #00b0f0;
  border-radius: 3px;
  background: #10102a;
  box-shadow: 0 3px 0 #777;
}

.specwrap canvas {
  display: block;
}

.specgap {
  height: 7px;
  background: linear-gradient(#9a9a9a 0, #9a9a9a 1.5px, #14142a 1.5px);
}

.corner {
  position: absolute;
  top: 6px;
  width: 8px;
  height: 9px;
  background: linear-gradient(135deg, #aaa 50%, #555 50%);
}

.corner.left {
  left: 1px;
}

.corner.right {
  right: 13px;
}

.ticks {
  position: absolute;
  left: 0;
  right: 0;
  bottom: -2px;
  height: 2px;
  background: repeating-linear-gradient(90deg, #d8e4ea 0, #d8e4ea 1px, transparent 1px, transparent 12px);
}

.scale {
  width: 24px;
  height: 388px;
  flex: none;
  background: linear-gradient(#a8a8a8 0, #a8a8a8 5px, #4d4d4d 5px);
}

.scale svg {
  display: block;
}

.scaletext {
  font-size: 10px;
  letter-spacing: -0.2px;
  fill: #777;
}

.scaletext.hi {
  fill: #e2e2e2;
}

.scaletext.unitname {
  font-size: 8.5px;
  letter-spacing: -0.1px;
  fill: #cfcfcf;
}

.caption {
  display: flex;
  height: 44px;
  margin: 0 0 0 807px;
  font-size: 32px;
  font-weight: 700;
  line-height: 44px;
  white-space: nowrap;
}

.white {
  color: #fff;
}

.peach {
  margin-left: 27px;
  color: #fbe0c8;
}

.hot {
  margin-left: 8px;
  color: #f40060;
  text-shadow: 1px 1px 2px #000;
}

.marks {
  position: absolute;
  left: 0;
  top: 0;
  pointer-events: none;
}
</style>
